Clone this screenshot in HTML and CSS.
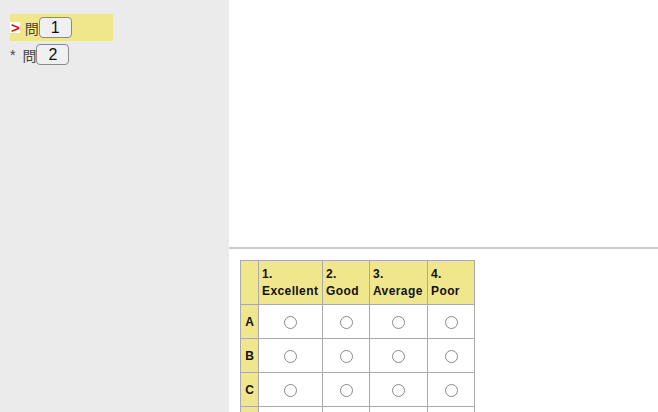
FILE: index.html
```html
<!DOCTYPE html>
<html lang="ja">
<head>
  <meta charset="UTF-8">
  <title>設問</title>
  <link rel="stylesheet" href="styles.css">
</head>
<body>
  <div class="layout">
    <!-- 左側: 設問リスト -->
    <div class="sidebar">
      <div class="q-item current">
        <span class="mark">&gt;</span>問<button class="q-btn">1</button>
      </div>
      <div class="q-item">
        <span class="mark">*</span>問<button class="q-btn">2</button>
      </div>
    </div>

    <!-- 右側: 回答エリア -->
    <div class="main">
      <div class="preview"></div>
      <div class="answer">
        <table class="matrix">
          <colgroup>
            <col class="c-label">
            <col class="c-1">
            <col class="c-2">
            <col class="c-3">
            <col class="c-4">
          </colgroup>
          <thead>
            <tr>
              <th></th>
              <th>1.<br>Excellent</th>
              <th>2.<br>Good</th>
              <th>3.<br>Average</th>
              <th>4.<br>Poor</th>
            </tr>
          </thead>
          <tbody>
            <tr>
              <th>A</th>
              <td><input type="radio" name="a"></td>
              <td><input type="radio" name="a"></td>
              <td><input type="radio" name="a"></td>
              <td><input type="radio" name="a"></td>
            </tr>
            <tr>
              <th>B</th>
              <td><input type="radio" name="b"></td>
              <td><input type="radio" name="b"></td>
              <td><input type="radio" name="b"></td>
              <td><input type="radio" name="b"></td>
            </tr>
            <tr>
              <th>C</th>
              <td><input type="radio" name="c"></td>
              <td><input type="radio" name="c"></td>
              <td><input type="radio" name="c"></td>
              <td><input type="radio" name="c"></td>
            </tr>
            <tr>
              <th>D</th>
              <td><input type="radio" name="d"></td>
              <td><input type="radio" name="d"></td>
              <td><input type="radio" name="d"></td>
              <td><input type="radio" name="d"></td>
            </tr>
          </tbody>
        </table>
      </div>
    </div>
  </div>
</body>
</html>
```

FILE: styles.css
```css
html, body {
  height: 100%;
  overflow: hidden;
}

body {
  margin: 0;
  font-family: "Liberation Sans", "Noto Sans CJK JP", sans-serif;
  color: #222;
  background-color: #fff;
}

.layout {
  display: flex;
  height: 100%;
}

.sidebar {
  width: 229px;
  flex-shrink: 0;
  background-color: #ebebeb;
  padding-top: 14px;
  box-sizing: border-box;
}

.q-item {
  display: flex;
  align-items: center;
  width: 103px;
  height: 27px;
  margin-left: 10px;
  font-size: 14px;
  color: #444;
}

.q-item.current {
  background-color: #f0e68c;
}

.mark {
  display: inline-block;
  margin-right: 7px;
}

.current .mark {
  color: #d21400;
  font-weight: bold;
  font-size: 15px;
  background-color: #fff;
  line-height: 11px;
  padding-left: 1px;
  margin-right: 5px;
}

.q-btn {
  width: 33px;
  height: 21px;
  margin-left: 0;
  padding: 0;
  font-family: "Liberation Sans", sans-serif;
  font-size: 16px;
  color: #111;
  background-color: #f0f0f0;
  border: 1px solid #8a8a8a;
  border-radius: 4px;
}

.main {
  flex: 1;
  display: flex;
  flex-direction: column;
}

.preview {
  height: 247px;
  flex-shrink: 0;
}

.answer {
  border-top: 2px solid #cccccc;
  padding: 11px 11px;
}

.matrix {
  border-collapse: collapse;
  table-layout: fixed;
  width: 235px;
  font-size: 12px;
}

.c-label { width: 18px; }
.c-1 { width: 64px; }
.c-2 { width: 47px; }
.c-3 { width: 58px; }
.c-4 { width: 47px; }

.matrix th,
.matrix td {
  border: 1px solid #aaaaaa;
  padding: 0;
}

.matrix thead th {
  background-color: #f0e68c;
  height: 43px;
  text-align: left;
  vertical-align: middle;
  padding: 0 3px;
  line-height: 17px;
  letter-spacing: 0.4px;
  color: #111;
}

.matrix tbody th {
  background-color: #f0e68c;
  text-align: center;
  color: #111;
}

.matrix tbody td {
  height: 33px;
  text-align: center;
  vertical-align: middle;
  background-color: #fff;
}

.matrix input[type="radio"] {
  appearance: none;
  -webkit-appearance: none;
  width: 13px;
  height: 13px;
  margin: 0;
  border: 1px solid #8a8a8a;
  border-radius: 50%;
  background-color: #fff;
  vertical-align: middle;
}
```
